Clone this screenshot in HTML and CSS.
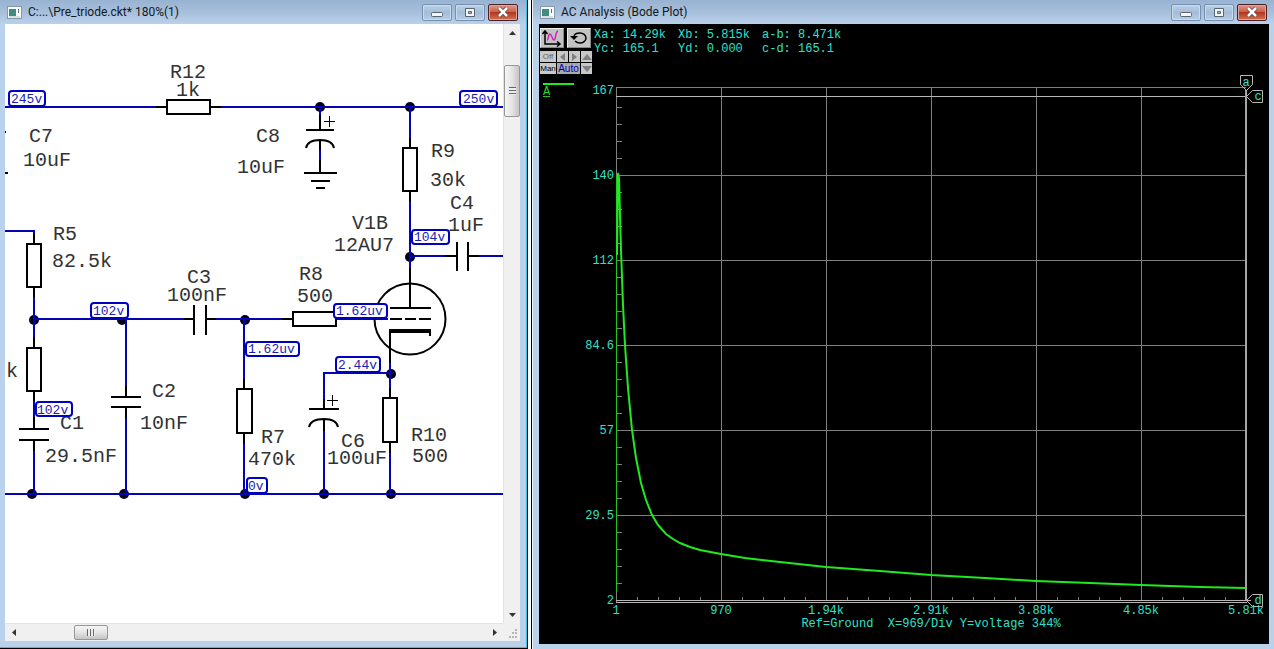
FILE: index.html
```html
<!DOCTYPE html>
<html lang="en">
  <head>
    <meta charset="UTF-8" />
    <meta name="viewport" content="width=device-width, initial-scale=1.0" />
    <title>Pre_triode.ckt</title>
    <link rel="stylesheet" href="styles.css">
  </head>

  <body>
    <div class="desktop">
      <!-- schematic window -->
      <section class="window schematic">
        <header class="titlebar">
          <svg class="app-icon" width="15" height="13" viewBox="0 0 15 13">
            <rect x=".5" y=".5" width="14" height="12" fill="#fafafa" stroke="#889aa9"/>
            <path d="M2 3h7v7H2z" fill="#418c80"/><path d="M11 3h1v4h-1z" fill="#547083"/><path d="M2 11h11" stroke="#b7c3c9"/>
          </svg>
          <h1>C:...\Pre_triode.ckt* 180%(1)</h1>
          <div class="controls">
            <button type="button" aria-label="Minimize"><svg width="12" height="12"><rect x=".5" y="6.5" width="11" height="4" rx="1" fill="#f5f5f5" stroke="#596572"/></svg></button>
            <button type="button" aria-label="Maximize"><svg width="12" height="12"><path fill="#f5f5f5" fill-rule="evenodd" stroke="#596572" d="M1.500 2.500h9v8h-9zM4.500 5.500h3v2h-3z"/></svg></button>
            <button type="button" class="close" aria-label="Close"><svg width="12" height="12"><path d="M2 2l8 8M10 2l-8 8" stroke="#6a3b3b" stroke-width="4"/><path d="M2 2l8 8M10 2l-8 8" stroke="#fff" stroke-width="2.500"/></svg></button>
          </div>
        </header>

        <div class="pane">
          <svg class="canvas" viewBox="5 24 498 599" preserveAspectRatio="xMinYMin slice">
            <g class="dots">
              <circle cx="320" cy="107" r="5"/><circle cx="410" cy="107" r="5"/><circle cx="410" cy="257" r="5"/>
              <circle cx="34" cy="320" r="5"/><circle cx="122" cy="320" r="5"/><circle cx="245" cy="320" r="5"/>
              <circle cx="391" cy="374" r="5"/><circle cx="32" cy="494" r="5"/><circle cx="124" cy="494" r="5"/>
              <circle cx="245" cy="494" r="5"/><circle cx="324" cy="494" r="5"/><circle cx="391" cy="494" r="5"/>
            </g>
            <path class="wire" d="M5 107H158M220 107H503M320 107V115M320 150V160M410 107V138M410 200V272M410 256H446M478 256H503
              M5 231H34V236M34 296V338M34 319H185M216 319H283M126 319V387M126 417V494M34 400V418M34 450V494
              M244 319V380M244 443V494M337 319H388M390 362V389M391 373H324V400M324 430V494M390 452V494M5 494H503"/>
            <path class="part" d="M156 107H167M210 107H221M320 115V130M306 130H334M306 148C307 143 312 140 320 140S333 143 334 148M320 140V150M320 160V173M304 173H337M311 181H330M316 188H325
              M410 138V148M410 190V201M410 268V308M390 308H431M445 256H457M457 242V271M468 242V271M468 256H479
              M34 234V244M34 287V297M34 337V348M34 390V401M34 417V429M19 429H49M19 440H49M34 440V451
              M184 319H194M194 305V335M206 305V335M206 319H216M282 319H293
              M126 386V397M111 397H141M111 407H141M126 407V418M244 379V389M244 433V444
              M390 388V398M390 441V453M324 399V409M309 409H339M309 427C310 422 315 419 324 419S337 422 338 427M324 419V431
              M390 363V331M430 331V336M390 319H402M405 319H416M419 319H431M5 173H8M5 132H6"/>
            <path class="cathode" d="M389 331H431"/>
            <circle class="part" cx="410" cy="319" r="35.500"/>
            <g class="part">
              <rect x="167" y="100" width="43" height="14"/><rect x="403" y="148" width="14" height="43"/>
              <rect x="27" y="244" width="14" height="43"/><rect x="27" y="348" width="14" height="43"/>
              <rect x="293" y="312" width="43" height="14"/><rect x="237" y="389" width="15" height="44"/>
              <rect x="383" y="398" width="14" height="44"/>
            </g>
            <path class="plus" d="M324 121.500H335M329.500 116V127M327 400.500H338M332.500 395V406"/>
            <g class="name">
              <text x="170" y="78">R12</text><text x="176" y="96">1k</text>
              <text x="29" y="142">C7</text><text x="23" y="166">10uF</text>
              <text x="256" y="142">C8</text><text x="237" y="173">10uF</text>
              <text x="431" y="157">R9</text><text x="430" y="186">30k</text>
              <text x="450" y="209">C4</text><text x="448" y="231">1uF</text>
              <text x="352" y="229">V1B</text><text x="334" y="251">12AU7</text>
              <text x="53" y="240">R5</text><text x="52" y="267">82.5k</text>
              <text x="187" y="283">C3</text><text x="167" y="301">100nF</text>
              <text x="299" y="280">R8</text><text x="297" y="302">500</text>
              <text x="6" y="377">k</text>
              <text x="152" y="397">C2</text><text x="140" y="429">10nF</text>
              <text x="60" y="429">C1</text><text x="45" y="462">29.5nF</text>
              <text x="261" y="443">R7</text><text x="248" y="465">470k</text>
              <text x="341" y="447">C6</text><text x="327" y="464">100uF</text>
              <text x="411" y="441">R10</text><text x="412" y="462">500</text>
            </g>
            <g class="probe">
              <rect x="9" y="91" width="36" height="15" rx="3"/><text x="11" y="103">245v</text>
              <rect x="460" y="91" width="37" height="15" rx="3"/><text x="463" y="103">250v</text>
              <rect x="412" y="230" width="37" height="14" rx="3"/><text x="414" y="241">104v</text>
              <rect x="91" y="303" width="37" height="15" rx="3"/><text x="93" y="315">102v</text>
              <rect x="334" y="304" width="53" height="14" rx="3"/><text x="336" y="315">1.62uv</text>
              <rect x="246" y="342" width="53" height="14" rx="3"/><text x="248" y="353">1.62uv</text>
              <rect x="336" y="357" width="44" height="15" rx="3"/><text x="338" y="369">2.44v</text>
              <rect x="36" y="402" width="36" height="14" rx="3"/><text x="37" y="414">102v</text>
              <rect x="247" y="478" width="20" height="15" rx="3"/><text x="248" y="490">0v</text>
            </g>
          </svg>

          <div class="scroll vertical">
            <button type="button" aria-label="Scroll up"><svg width="7" height="4"><path d="M0 4l3.500-4L7 4z"/></svg></button>
            <div class="thumb"></div>
            <button type="button" class="last" aria-label="Scroll down"><svg width="7" height="4"><path d="M0 0l3.500 4L7 0z"/></svg></button>
          </div>
          <div class="scroll horizontal">
            <button type="button" aria-label="Scroll left"><svg width="4" height="7"><path d="M4 0L0 3.500 4 7z"/></svg></button>
            <div class="thumb"></div>
            <button type="button" class="last" aria-label="Scroll right"><svg width="4" height="7"><path d="M0 0l4 3.500L0 7z"/></svg></button>
          </div>
          <div class="grip"><svg width="10" height="10"><path d="M7 1h2M4 4h2M7 4h2M1 8h2M4 8h2M7 8h2" stroke="#b3b6b9" stroke-width="2"/></svg></div>
        </div>
      </section>

      <!-- bode plot window -->
      <section class="window plot">
        <header class="titlebar">
          <svg class="app-icon" width="15" height="13" viewBox="0 0 15 13">
            <rect x=".5" y=".5" width="14" height="12" fill="#fafafa" stroke="#889aa9"/>
            <path d="M2 3h7v7H2z" fill="#418c80"/><path d="M11 3h1v4h-1z" fill="#547083"/><path d="M2 11h11" stroke="#b7c3c9"/>
          </svg>
          <h1>AC Analysis (Bode Plot)</h1>
          <div class="controls">
            <button type="button" aria-label="Minimize"><svg width="12" height="12"><rect x=".5" y="6.500" width="11" height="4" rx="1" fill="#f5f5f5" stroke="#596572"/></svg></button>
            <button type="button" aria-label="Maximize"><svg width="12" height="12"><path fill="#f5f5f5" fill-rule="evenodd" stroke="#596572" d="M1.500 2.500h9v8h-9zM4.500 5.500h3v2h-3z"/></svg></button>
            <button type="button" class="close" aria-label="Close"><svg width="12" height="12"><path d="M2 2l8 8M10 2l-8 8" stroke="#6a3b3b" stroke-width="4"/><path d="M2 2l8 8M10 2l-8 8" stroke="#fff" stroke-width="2.500"/></svg></button>
          </div>
        </header>

        <div class="screen">
          <div class="head">
            <div class="tools">
              <div class="big">
                <button type="button" aria-label="Scale axes">
                  <svg width="22" height="18" fill="none"><path d="M4 2v13H19M1.500 5L4 2l2.500 3M16 12.500l3 2.500-3 2.500" stroke="#000" stroke-width="1.500"/><path d="M6 11c2 0 1-6 3-6s2 6 4 6 1-8 4-9" stroke="#d020c0" stroke-width="1.500"/></svg>
                </button>
                <button type="button" aria-label="Reset">
                  <svg width="22" height="18" fill="none"><path d="M6 8c0-3 3-4 6-4s6 2 6 5-3 5-6 5c-2 0-4-1-5-2" stroke="#000" stroke-width="1.500"/><path d="M2 7h8L6 11z" fill="#000"/></svg>
                </button>
              </div>
              <div class="small">
                <button type="button" class="off">Off</button>
                <button type="button" aria-label="Left"><svg width="7" height="8"><path d="M6 0v8L1 4z"/></svg></button>
                <button type="button" aria-label="Right"><svg width="7" height="8"><path d="M1 0v8l5-4z"/></svg></button>
                <button type="button" aria-label="Up"><svg width="10" height="6"><path d="M0 6h10L5 0z"/></svg></button>
                <button type="button">Man</button>
                <button type="button" class="auto">Auto</button>
                <button type="button" aria-label="Down"><svg width="10" height="6"><path d="M0 0h10L5 6z"/></svg></button>
              </div>
            </div>
            <div class="readout">
              <span>Xa: 14.29k</span><span>Xb: 5.815k</span><span>a-b: 8.471k</span>
              <span>Yc: 165.1</span><span>Yd: 0.000</span><span>c-d: 165.1</span>
            </div>
          </div>

          <svg class="graph" viewBox="539 75 730 569" preserveAspectRatio="xMinYMin meet">
            <path class="grid" d="M616 87.500H1246M616 175.500H1246M616 260.500H1246M616 345.500H1246M616 430.500H1246M616 515.500H1246
              M721.500 87V600M826.500 87V600M931.500 87V600M1036.500 87V600M1141.500 87V600M616.500 87V602"/>
            <path class="grid" d="M617 107.500h5m-5 17h5m-5 17h5m-5 17h5M617 192.500h5m-5 17h5m-5 17h5m-5 17h5M617 277.500h5m-5 17h5m-5 17h5m-5 17h5
              M617 362.500h5m-5 17h5m-5 17h5m-5 17h5M617 447.500h5m-5 17h5m-5 17h5m-5 17h5M617 532.500h5m-5 17h5m-5 17h5m-5 17h5
              M637.500 597v4m21-4v4m21-4v4m21-4v4M742.500 597v4m21-4v4m21-4v4m21-4v4M847.500 597v4m21-4v4m21-4v4m21-4v4
              M952.500 597v4m21-4v4m21-4v4m21-4v4M1057.500 597v4m21-4v4m21-4v4m21-4v4M1162.500 597v4m21-4v4m21-4v4m21-4v4"/>
            <path class="cursor" d="M616 96.500H1247M616 600.500H1251M616 602.500H1247"/>
            <path class="cursor edge" d="M1246 90V600"/>
            <path class="cursor" d="M1240.500 75.500h12v9l-6 6-6-6zM1246.500 96.500l6-6h10v12h-10zM1246.500 600.500l6-6h10v12h-10z"/>
            <path class="axis" d="M616.500 175V592"/>
            <path class="trace" d="M617 255L618 173L619 178L620 215L621 250L623 305L625 345L628 388L632 430L636 458L641 483L646 500L652 515
              L658 525L666 534L673 539L680 543L690 547L700 550L721 554L745 558L780 562L826 567L880 571L931 575L985 578L1036 581L1090 583L1141 585L1200 587L1246 588"/>
            <path class="trace" d="M543 84H574"/>
            <text class="channel" x="543" y="95">A</text>
            <path class="channel-line" d="M543 96.500h7"/>
            <g class="labels y">
              <text x="614" y="94">167</text><text x="614" y="179">140</text><text x="614" y="264">112</text>
              <text x="614" y="349">84.6</text><text x="614" y="434">57</text><text x="614" y="519">29.5</text><text x="614" y="604">2</text>
            </g>
            <g class="labels x">
              <text x="616" y="614">1</text><text x="721" y="614">970</text><text x="826" y="614">1.94k</text>
              <text x="931" y="614">2.91k</text><text x="1036" y="614">3.88k</text><text x="1141" y="614">4.85k</text><text x="1246" y="614">5.81k</text>
              <text x="931" y="627" xml:space="preserve">Ref=Ground  X=969/Div Y=voltage 344%</text>
              <text x="1246" y="86">a</text><text x="1258" y="100">c</text><text x="1258" y="604">d</text>
            </g>
          </svg>
        </div>
      </section>
    </div>
  </body>
</html>
```
FILE: styles.css
```css
* {
  box-sizing: border-box;
}
body {
  margin: 0;
  background: #fff;
  font-family: Roboto, "Open Sans", sans-serif;
}
button {
  padding: 0;
  margin: 0;
  border: 0;
  background: none;
  display: flex;
  align-items: center;
  justify-content: center;
}
svg {
  display: block;
}

.desktop {
  display: grid;
  grid-template-columns: 528fr 743fr;
  gap: 3px;
  height: 100vh;
}

/* window frame */
.window {
  display: flex;
  flex-direction: column;
  min-width: 0;
  min-height: 0;
  background: #b9d1ea;
}
.schematic {
  padding: 0 7px 7px 5px;
  border-right: 1px solid #000;
  border-bottom: 1px solid #000;
  box-shadow: inset -1px -1px #35c3e0;
}
.schematic .titlebar {
  margin: 0 -6px 0 -5px;
  padding-right: 8px;
}
.plot {
  padding: 0 5px 5px 7px;
  border-left: 1px solid #000;
  box-shadow: inset 1px 0 #eef5fc;
}
.plot .titlebar {
  margin: 0 -5px 0 -6px;
}
.titlebar {
  flex: none;
  display: flex;
  align-items: center;
  height: 24px;
  padding: 0 7px;
  background: linear-gradient(#98b3d1, #a6bfdb 50%, #b9d1ea);
}
.titlebar h1 {
  flex: 1;
  margin: 0 0 0 6px;
  font-size: 12px;
  line-height: 24px;
  font-weight: normal;
  color: #14181c;
  white-space: nowrap;
}
.controls {
  display: flex;
  gap: 3px;
}
.controls button {
  width: 30px;
  height: 17px;
  border: 1px solid #7590ae;
  border-radius: 2px;
  background: linear-gradient(#bdd1e7, #a3bcd8 50%, #b6cde6);
  box-shadow: inset 0 0 0 1px #c9dbed;
}
.controls .close {
  border-color: #4d1f25;
  background: linear-gradient(#dc9b8d, #c9604c 45%, #b43520 50%, #d27355);
  box-shadow: inset 0 0 0 1px #dfa497;
}

/* schematic */
.pane {
  flex: 1;
  min-height: 0;
  display: grid;
  grid-template-columns: 1fr 17px;
  grid-template-rows: 1fr 18px;
  background: #fff;
}
.canvas {
  width: 100%;
  height: 100%;
  min-height: 0;
}
.wire,
.part,
.plus,
.cathode {
  fill: none;
  stroke: #000;
  stroke-width: 2;
}
.wire {
  stroke: #0404b4;
}
.plus {
  stroke-width: 1;
}
.cathode {
  stroke-width: 4;
}
.part rect {
  fill: #fff;
}
.dots {
  fill: #00001c;
}
.name {
  font: 20px "Liberation Mono", monospace;
  fill: #333;
}
.probe {
  font: 13px "Liberation Mono", monospace;
  fill: #1c1cb4;
}
.probe rect {
  fill: #fff;
  stroke: #0000c0;
  stroke-width: 2;
}

.scroll {
  display: flex;
  background: #f0f0f0;
}
.scroll path {
  fill: #333;
}
.scroll .last {
  margin-top: auto;
}
.scroll .thumb {
  border: 1px solid #979797;
  border-radius: 2px;
}
.vertical {
  flex-direction: column;
  border-left: 1px solid #e3e3e3;
}
.vertical button {
  height: 17px;
}
.vertical .thumb {
  height: 52px;
  margin-top: 24px;
  background:
    repeating-linear-gradient(#666 0 1px, #eee 1px 3px) center / 7px 8px no-repeat,
    linear-gradient(90deg, #f5f5f5, #e4e4e4 50%, #c4c4c4);
}
.horizontal {
  border-top: 1px solid #e3e3e3;
  padding: 1px 0;
}
.horizontal button {
  width: 17px;
}
.horizontal .thumb {
  width: 34px;
  margin-left: 52px;
  background:
    repeating-linear-gradient(90deg, #666 0 1px, #eee 1px 3px) center / 8px 7px no-repeat,
    linear-gradient(#f5f5f5, #e4e4e4 50%, #c4c4c4);
}
.horizontal .last {
  margin: 0 0 0 auto;
}
.grip {
  display: flex;
  align-items: flex-end;
  justify-content: flex-end;
  padding: 2px;
  background: #f0f0f0;
}

/* bode plot */
.screen {
  flex: 1;
  min-height: 0;
  display: flex;
  flex-direction: column;
  background: #000;
}
.head {
  flex: none;
  display: flex;
  gap: 2px;
  height: 51px;
  padding: 4px 1px 0;
}
.tools {
  width: 52px;
}
.big {
  display: flex;
  gap: 3px;
  margin-bottom: 3px;
}
.big button {
  width: 24px;
  height: 20px;
  background: #c3c3c3;
  border: 1px solid;
  border-color: #eee #888 #888 #eee;
}
.small {
  display: grid;
  grid-template-columns: 16px 11px 11px 11px;
  grid-auto-rows: 11px;
  gap: 1px;
}
.small button {
  background: #c8c8c8;
  font: 8px "Liberation Sans", sans-serif;
  line-height: 11px;
  color: #000;
}
.small path {
  fill: #808080;
}
.small .off {
  color: #666;
}
.small .auto {
  grid-column: span 2;
  background: #a9a9b4;
  font-size: 10px;
  color: #0000b0;
}
.readout {
  display: grid;
  grid-template-columns: 84px 84px auto;
  grid-auto-rows: 14px;
  font: 12px "Liberation Mono", monospace;
  line-height: 14px;
  color: #2fe0cc;
  white-space: nowrap;
}
.graph {
  flex: 1;
  width: 100%;
  min-height: 0;
}
.grid,
.cursor,
.axis,
.trace,
.channel-line {
  fill: none;
  stroke: #808080;
}
.cursor {
  stroke: #bab6b6;
}
.edge {
  stroke: #a5a5a5;
  stroke-width: 2;
}
.axis,
.channel-line {
  stroke: #1fc81f;
}
.trace {
  stroke: #1fea1f;
  stroke-width: 2;
}
.channel {
  font: 12px "Liberation Mono", monospace;
  fill: #22d822;
}
.labels {
  font: 12px "Liberation Mono", monospace;
  fill: #2fe0cc;
}
.labels.y {
  text-anchor: end;
}
.labels.x {
  text-anchor: middle;
}
```
